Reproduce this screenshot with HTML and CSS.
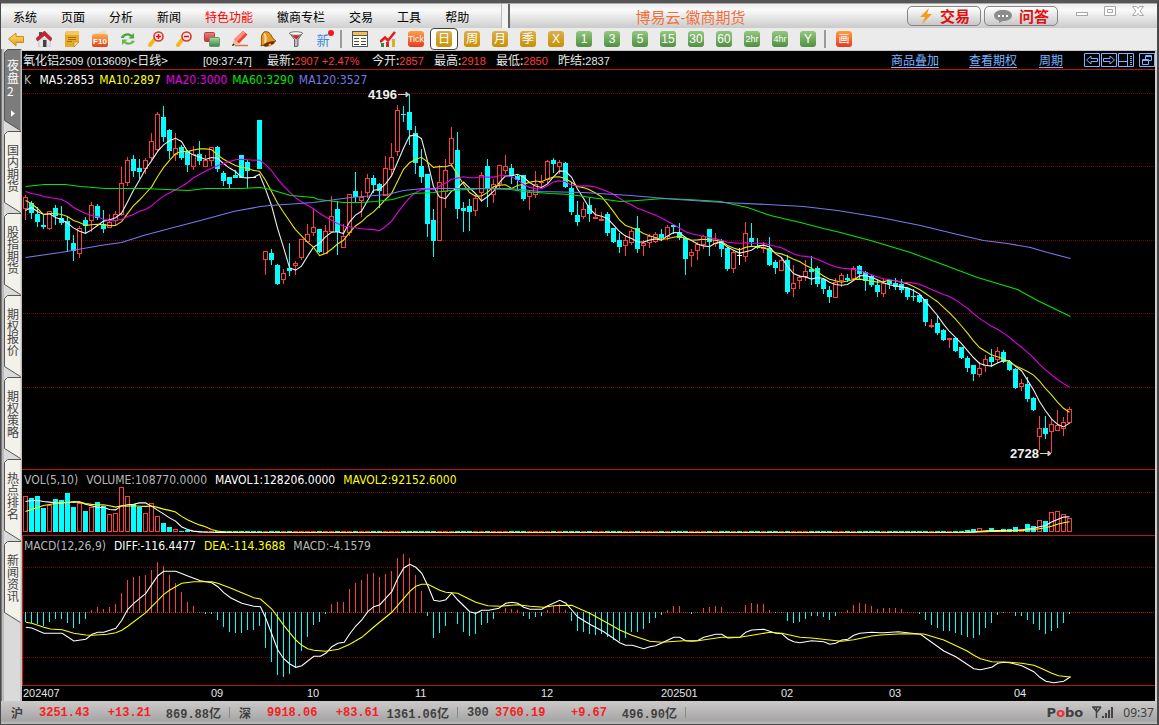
FILE: index.html
```html
<!DOCTYPE html>
<html lang="zh-CN">
<head>
<meta charset="utf-8">
<title>博易云-徽商期货</title>
<link rel="stylesheet" href="styles.css">
</head>
<body>
<svg class="defs" aria-hidden="true">
  <defs>
    <linearGradient id="g-gold" x1="0" y1="0" x2="0" y2="1"><stop offset="0" stop-color="#ffe27a"/><stop offset="1" stop-color="#e09a10"/></linearGradient>
    <linearGradient id="g-red" x1="0" y1="0" x2="0" y2="1"><stop offset="0" stop-color="#f08080"/><stop offset="1" stop-color="#c83030"/></linearGradient>
    <linearGradient id="g-green" x1="0" y1="0" x2="0" y2="1"><stop offset="0" stop-color="#a8d8a0"/><stop offset="1" stop-color="#3c8848"/></linearGradient>
    <linearGradient id="g-orange" x1="0" y1="0" x2="0" y2="1"><stop offset="0" stop-color="#ffb050"/><stop offset="1" stop-color="#e04020"/></linearGradient>
  </defs>
  <symbol id="tab" viewBox="0 0 17 82"><path d="M16.500 .5H3.500L.5 3.500V71.500L16.500 81.500Z" fill="currentColor"/><path d="M17 .5H3.500L.5 3.500V71.500L16.500 81.500" fill="none" stroke="#555"/></symbol>
</svg>
<div class="app">
  <header class="titlebar">
    <nav class="menu">
      <button>系统</button><button>页面</button><button>分析</button><button>新闻</button><button class="hot">特色功能</button><button>徽商专栏</button><button>交易</button><button>工具</button><button>帮助</button>
    </nav>
    <div class="caption">
      <h1 class="title">博易云-徽商期货</h1>
      <button class="pill"><svg width="16" height="16" viewBox="0 0 16 16"><path d="M11 0L2 9H7L4 16L14 6H9Z" fill="#f59a1c"/></svg>交易</button>
      <button class="pill"><svg width="20" height="16" viewBox="0 0 20 16"><path d="M10 2C15 2 19 4 19 7.500S15 13 10 13L6 15L6 12.500C3 11.500 1 10 1 7.500C1 4 5 2 10 2Z" fill="#8c8c8c"/><path d="M5 7h2v2H5zM9 7h2v2H9zM13 7h2v2h-2z" fill="#fff"/></svg>问答</button>
      <div class="win">
        <button aria-label="最小化"><svg width="16" height="14"><rect x="2.500" y="7.500" width="11" height="3" fill="#fff" stroke="#a8a8a8"/></svg></button>
        <button aria-label="最大化"><svg width="16" height="14"><path d="M2.500 1.500h11v9h-11zM5.500 4.500h5v3h-5z" fill="#fff" fill-rule="evenodd" stroke="#a8a8a8"/></svg></button>
        <button aria-label="关闭"><svg width="16" height="14"><path d="M2.500 1.500h4l1.500 2 1.500-2h4l-3.500 4.500 3.500 4.500h-4l-1.500-2-1.500 2h-4L6 6Z" fill="#fff" stroke="#a8a8a8"/></svg></button>
      </div>
    </div>
  </header>

  <div class="toolbar">
    <button aria-label="后退"><svg viewBox="0 0 16 16"><path d="M.5 8L8 2v3.500h7.500v6H8V15Z" fill="url(#g-gold)" stroke="#d08a10"/></svg></button>
    <button aria-label="主页"><svg viewBox="0 0 16 16"><path d="M3 8h11v8H3z" fill="#e8e8ec" stroke="#b0b0b8" stroke-width=".6"/><path d="M3 1h3v4H3z" fill="#555"/><path d="M8.500 0L0 7.500 1.500 10 8.500 4.500 14.500 10 16 7.500Z" fill="#d02030" stroke="#a01020" stroke-width=".6"/><path d="M7 9h3.500v7H7z" fill="#444"/></svg></button>
    <button aria-label="便笺"><svg viewBox="0 0 16 16"><path d="M2 0h13v11l-5 5H1V3Z" fill="#e8a828"/><path d="M2 0h13v4H2z" fill="#f4c860"/><path d="M15 11H10v5Z" fill="#fbe0a0" stroke="#b87808" stroke-width=".6"/><path d="M4 6.500h8M4 8.500h8M3 10.500h5" stroke="#a86c08"/></svg></button>
    <button aria-label="F10"><svg viewBox="0 0 16 16"><path d="M1 3L13 0 14 3Z" fill="#e8d8c0"/><rect x="0" y="3" width="16" height="13" rx="2" fill="url(#g-orange)"/><text x="8" y="13" class="mini">F10</text></svg></button>
    <button aria-label="刷新"><svg viewBox="0 0 16 16"><path d="M1 6C3 2 9 1 12 4l2-2v5.500H8.500L10.500 5.500C8 4 5 4 4 7H1Z" fill="#48a838"/><path d="M15 10C13 14 7 15 4 12l-2 2V8.500H7.500L5.500 10.500C8 12 11 12 12 9.500Z" fill="#68b850"/></svg></button>
    <button aria-label="放大"><svg viewBox="0 0 16 16"><path d="M6 9L2 14" stroke="#f5b820" stroke-width="4" stroke-linecap="round"/><circle cx="10.500" cy="5.500" r="4.500" fill="#fbe8e4" stroke="#dc3428" stroke-width="1.600"/><path d="M8 5.500h5M10.500 3v5" stroke="#d01818" stroke-width="1.500"/></svg></button>
    <button aria-label="缩小"><svg viewBox="0 0 16 16"><path d="M6 9L2 14" stroke="#f5b820" stroke-width="4" stroke-linecap="round"/><circle cx="10.500" cy="5.500" r="4.500" fill="#fbe8e4" stroke="#dc3428" stroke-width="1.600"/><path d="M8 5.500h5" stroke="#d01818" stroke-width="1.500"/></svg></button>
    <button aria-label="叠加"><svg viewBox="0 0 16 16"><rect x=".5" y="1.500" width="10" height="9" rx="1" fill="url(#g-red)" stroke="#c04040"/><rect x="5.500" y="6.500" width="10" height="9" rx="1" fill="url(#g-green)" stroke="#609868"/></svg></button>
    <button aria-label="画笔"><svg viewBox="0 0 16 16"><path d="M3 14.500h13" stroke="#e86858" stroke-width="1.500"/><path d="M11 0L15.500 3.500 7 12.500 2 8.500Z" fill="#f04030"/><path d="M11 0L13.500 2 4.500 11 2 8.500Z" fill="#ff9080"/><path d="M2 8.500L7 12.500 0 15Z" fill="#e8c090"/><path d="M1 12.500L3 14 0 15Z" fill="#222"/></svg></button>
    <button aria-label="提醒"><svg viewBox="0 0 16 16"><path d="M4 1C8-.5 11 3 12 6c1 2 3 3 4 4L1 15C2 12 1 9 1.500 6 2 3 3 2 4 1Z" fill="#e89828" stroke="#904c08"/><path d="M4 3c2 1 2 6 1 9" stroke="#ffe090" stroke-width="2" fill="none"/><ellipse cx="9" cy="13" rx="6" ry="2" transform="rotate(-18 9 13)" fill="#6c3008"/><circle cx="10" cy="14" r="1.500" fill="#f0b040"/></svg></button>
    <button aria-label="筛选"><svg viewBox="0 0 16 16"><path d="M1.500 2h13L10 8.500V15L6.500 16V8.500Z" fill="#b8bcc4" stroke="#606468"/><ellipse cx="8" cy="2.500" rx="6.500" ry="1.800" fill="#f8f8f8" stroke="#777"/><path d="M4 4.500h8L8.500 8.500Z" fill="#d82020"/></svg></button>
    <button class="new">新<i></i></button>
    <span class="sep"></span>
    <button aria-label="报价"><svg viewBox="0 0 16 16"><rect x=".5" y=".5" width="15" height="15" fill="#fff" stroke="#555"/><path d="M1 1h14v3H1z" fill="#f0c050"/><path d="M1 4.500h14" stroke="#555"/><path d="M2 7.500h5M9 7.500h5" stroke="#208030"/><path d="M2 10.500h5M9 10.500h5" stroke="#c02020"/><path d="M2 13.500h5M9 13.500h5" stroke="#204080"/></svg></button>
    <button aria-label="走势"><svg viewBox="0 0 16 16"><path d="M1 12h3v4H1z" fill="#308838"/><path d="M6 11h3v5H6z" fill="#c83020"/><path d="M12 8h3v8h-3z" fill="#d8b020"/><path d="M0 11L5 6.500 8 9.500 15 1" fill="none" stroke="#e81818" stroke-width="2.500"/></svg></button>
    <button><b class="tile orange">Tick</b></button>
    <button class="on"><b class="tile gold">日</b></button>
    <button><b class="tile gold">周</b></button>
    <button><b class="tile gold">月</b></button>
    <button><b class="tile gold">季</b></button>
    <button><b class="tile gold">X</b></button>
    <button><b class="tile green">1</b></button>
    <button><b class="tile green">3</b></button>
    <button><b class="tile green">5</b></button>
    <button><b class="tile green">15</b></button>
    <button><b class="tile green">30</b></button>
    <button><b class="tile green">60</b></button>
    <button><b class="tile green small">2hr</b></button>
    <button><b class="tile green small">4hr</b></button>
    <button><b class="tile green">Y</b></button>
    <span class="sep"></span>
    <button><b class="tile orange">画</b></button>
  </div>

  <main class="work">
    <nav class="tabs">
      <button class="tab active"><svg><use href="#tab"/></svg><span>夜盘2</span><svg class="play" viewBox="0 0 5 8"><path d="M0 0L5 4 0 8Z" fill="#fff"/></svg></button>
      <button class="tab"><svg><use href="#tab"/></svg><span>国内期货</span></button>
      <button class="tab"><svg><use href="#tab"/></svg><span>股指期货</span></button>
      <button class="tab"><svg><use href="#tab"/></svg><span>期权报价</span></button>
      <button class="tab"><svg><use href="#tab"/></svg><span>期权策略</span></button>
      <button class="tab"><svg><use href="#tab"/></svg><span>热点排名</span></button>
      <button class="tab"><svg><use href="#tab"/></svg><span>新闻资讯</span></button>
    </nav>
    <section class="charts">
      <div class="quote">
        <span class="q-name">氧化铝<b>2509 (013609)</b>&lt;日线&gt;</span>
        <span class="q-time"><b>[09:37:47]</b></span>
        <span class="q-last">最新:<b class="up">2907 +2.47%</b></span>
        <span class="q-item">今开:<b class="up">2857</b></span>
        <span class="q-item">最高:<b class="up">2918</b></span>
        <span class="q-item">最低:<b class="up">2850</b></span>
        <span class="q-item">昨结:<b>2837</b></span>
        <span class="links"><a href="#">商品叠加</a><a href="#">查看期权</a><a href="#">周期</a></span>
        <span class="tools">
          <button aria-label="左移"><svg width="16" height="14"><path d="M.5.5h15v13H.5zM2.500 7L7 3v2.500h6.500v3H7V11Z"/></svg></button>
          <button aria-label="右移"><svg width="16" height="14"><path d="M.5.5h15v13H.5zM13.500 7L9 3v2.500H2.500v3H9V11Z"/></svg></button>
          <button aria-label="侧栏"><svg width="16" height="14"><path d="M.5.5h15v13H.5zM.5 8.500h9M9.500.5v13M12 3.500h2M12 5.500h2M12 7.500h2M12 9.500h2M12 11.500h2"/></svg></button>
          <button aria-label="还原" class="restore"><svg width="16" height="14"><path d="M.5.5h15v13H.5zM3.500 6.500h6v5h-6zM3 7.500h7M6.500 6V2.500h6v5H10M6 3.500h7"/></svg></button>
        </span>
      </div>
      <div class="panel price">
        <svg id="price"></svg>
        <div class="legend"><span class="c-grey">K&nbsp;</span><span class="c-white">MA5:2853</span><span class="c-yellow">MA10:2897</span><span class="c-magenta">MA20:3000</span><span class="c-green">MA60:3290</span><span class="c-blue">MA120:3527</span></div>
      </div>
      <div class="panel volume">
        <svg id="volume"></svg>
        <div class="legend"><span class="c-grey">VOL(5,10)</span><span class="c-grey">VOLUME:108770.0000</span><span class="c-white">MAVOL1:128206.0000</span><span class="c-yellow">MAVOL2:92152.6000</span></div>
      </div>
      <div class="panel macd">
        <svg id="macd"></svg>
        <div class="legend"><span class="c-grey">MACD(12,26,9)</span><span class="c-white">DIFF:-116.4477</span><span class="c-yellow">DEA:-114.3688</span><span class="c-grey">MACD:-4.1579</span></div>
      </div>
      <svg id="axis" class="axis"></svg>
    </section>
  </main>

  <footer class="status">
    <div class="idx"><span>沪</span><b class="up">3251.43</b><b class="up chg">+13.21</b><b class="amt">869.88亿</b></div>
    <div class="idx"><span>深</span><b class="up">9918.06</b><b class="up chg">+83.61</b><b class="amt">1361.06亿</b></div>
    <div class="idx"><span>300</span><b class="up">3760.19</b><b class="up chg">+9.67</b><b class="amt">496.90亿</b></div>
    <div class="sys"><strong>P<em>o</em>bo</strong><svg width="22" height="13"><path d="M0 1h9M1 1l4 5 4-5M4.500 1v11" fill="none" stroke="#444" stroke-width="1.500"/><path d="M10 10h2v2h-2zM13 7h2v5h-2zM16 4h2v8h-2zM19 1h2v11h-2z" fill="#444"/></svg><time>09:37</time></div>
  </footer>
</div>
<script src="chart.js"></script>
</body>
</html>
```

FILE: styles.css
```css
* { box-sizing: border-box; }
body { margin: 0; font-family: "Liberation Sans", "Noto Sans CJK SC", sans-serif; font-size: 12px; color: #000; }
button { border: 0; padding: 0; margin: 0; background: none; font: inherit; color: inherit; }
.defs { position: absolute; width: 0; height: 0; }
.app { min-height: 100vh; display: flex; flex-direction: column; background: #d2cccc; border: 1px solid #4a4a4a; border-top: 3px solid #555; border-right-width: 2px; }

/* title bar */
.titlebar { display: flex; height: 25px; border-top: 1px solid #aaa; background: #f4f4f4; }
.menu { display: flex; gap: 24px; align-items: center; padding-left: 12px; width: 501px; background: linear-gradient(#ececec, #fafafa 25%, #cfcfcf); font-family: "Noto Sans CJK SC", sans-serif; border-right: 1px solid #bbb; }
.hot { color: #f00; }
.caption { flex: 1; display: flex; align-items: center; margin-left: 6px; border-left: 2px solid #666; background: linear-gradient(#ececec, #fafafa 25%, #cacaca); }
.title { flex: 1; margin: 0; padding-right: 36px; text-align: center; font: 15px "Liberation Sans", "Noto Sans CJK SC", sans-serif; color: #f0703c; }
.pill { display: flex; align-items: center; justify-content: center; gap: 6px; width: 74px; height: 20px; margin-right: 3px; border: 1px solid #858585; border-radius: 5px; background: linear-gradient(#fff, #e4e4e4 50%, #c8c8c8); color: #e01010; font: bold 15px "Noto Sans CJK SC", sans-serif; line-height: 16px; }
.win { display: flex; gap: 12px; padding: 0 11px 8px 13px; }
.win button { height: 14px; }

/* toolbar */
.toolbar { display: flex; height: 23px; padding-left: 1px; background: #ebebeb; align-items: center; border-bottom: 1px solid #ccc6c6; }
.toolbar button { width: 28px; height: 22px; display: flex; align-items: center; justify-content: center; position: relative; }
.toolbar svg { width: 16px; height: 16px; }
.toolbar .sep { width: 2px; height: 18px; margin: 0 4px 0 2px; background: #999; }
.toolbar .on { border: 1px solid #444; border-radius: 4px; background: #fff; }
.mini { font: bold 8px "Liberation Sans", sans-serif; fill: #fff; text-anchor: middle; }
.toolbar .new { color: #3a8ad8; font-size: 13px; padding-right: 2px; }
.new i { position: absolute; right: 4px; top: 2px; width: 6px; height: 6px; border-radius: 50%; background: #f01818; }
.tile { width: 16px; height: 16px; border-radius: 3px; color: #fff; font: 12px/16px "Liberation Sans", "Noto Sans CJK SC", sans-serif; text-align: center; display: flex; justify-content: center; }
.gold { background: linear-gradient(#dcb050, #c89000); }
.green { background: linear-gradient(#94c880, #509040); }
.orange { background: linear-gradient(#ffa040, #e83820); }
.toolbar .tile.small, .tile.orange { font-size: 9px; }
.toolbar button:last-child .tile { font-size: 11px; }

/* workspace */
.work { flex: 1; display: flex; padding-right: 2px; }
.tabs { display: flex; flex-direction: column; width: 21px; padding-left: 3px; margin-top: -2px; background: linear-gradient(90deg, #777 0 1px, #bbb 1px 3px, #dadada 3px 19px, #c8c0c0 19px); }
.tab { position: relative; color: #f2f1ea; width: 17px; height: 82px; }
.tab svg { position: absolute; left: 0; top: 0; width: 17px; height: 82px; }
.tab span { position: relative; display: block; width: 12px; height: 52px; margin: -4px 0 0 3px; color: #444; font: 12px/12px "Noto Sans CJK SC", sans-serif; word-break: break-all; }
.tab.active { color: #7c7c7c; }
.tab.active span { color: #fff; text-align: left; margin-top: -24px; height: 40px; line-height: 13px; }
.tab .play { left: 7px; top: 61px; width: 4px; height: 7px; }
.charts { flex: 1; min-width: 0; background: #000; color: #e6e6e6; display: flex; flex-direction: column; }
.quote { display: flex; height: 19px; line-height: 18px; padding-left: 1px; border-bottom: 1px solid #b81810; font-family: "Noto Sans CJK SC", sans-serif; white-space: nowrap; }
.quote b { font: 11px "Liberation Sans", sans-serif; }
.q-name { width: 180px; }
.q-time { width: 64px; }
.q-last { width: 105px; }
.q-item { width: 62px; }
.quote .up { color: #ff3c3c; }
.links { margin-left: auto; display: flex; gap: 30px; }
.links a { color: #78b4ff; text-underline-offset: 2px; }
.links a:last-child { margin-left: -8px; }
.tools { display: flex; gap: 1px; align-items: center; margin-left: 21px; }
.tools button { height: 14px; display: flex; }
.tools svg { fill: none; stroke: #78b4ff; }
.tools .restore { margin-left: 4px; }
.panel { position: relative; border-bottom: 1px solid #b81810; }
.panel > svg { display: block; width: 100%; height: 100%; }
.price { height: 400px; }
.volume { height: 66px; }
.macd { height: 150px; border-left: 1px solid #e01010; }
.legend { position: absolute; left: 2px; top: 2px; display: flex; gap: 8px; font: 12px/16px "DejaVu Sans Condensed", "DejaVu Sans", sans-serif; white-space: nowrap; }
.price .legend { gap: 5px; }
.macd .legend { left: 1px; }
.c-grey { color: #b8b8b8; }
.c-white { color: #fff; }
.c-yellow { color: #ff0; }
.c-magenta { color: #e800e8; }
.c-green { color: #00e800; }
.c-blue { color: #7878e8; }
.axis { width: 100%; height: 15px; display: block; }
.axis text { font: 11px "Liberation Sans", sans-serif; fill: #e6e6e6; }
.mark { font: bold 13px "Liberation Sans", sans-serif; fill: #f0f0f0; }

/* status bar */
.status { display: flex; align-items: center; height: 23px; padding-left: 10px; background: linear-gradient(#cdc9c9, #a6a6a6 85%, #c0c0c0); color: #404040; font: 12px "Liberation Mono", "Noto Sans CJK SC", monospace; white-space: nowrap; }
.idx { display: flex; align-items: center; }
.idx::after { content: ""; width: 1px; height: 11px; background: #888; margin: 0 9px 0 8px; }
.idx span { min-width: 28px; font-weight: bold; }
.idx .up { color: #f82020; min-width: 64px; }
.idx .chg { width: 48px; min-width: 0; text-align: right; }
.idx .amt { min-width: 70px; text-align: right; }
.sys { margin-left: auto; display: flex; align-items: center; gap: 9px; padding-right: 3px; font: 12px "Noto Sans", sans-serif; }
.sys strong { font: bold 13px "DejaVu Sans", sans-serif; }
.sys em { font-style: normal; color: #f03030; }
```

FILE: chart.js
```js
const LEFT = 22, STEP = 6, FIRST = 25;
const RED = "#ff3c3c", CYAN = "#00ffff";

// Each bar: colour, then high, body top, body bottom and low in chart pixels.
const bars = `r195,197,209,220 c201,203,213,219 c207,214,222,227 c214,225,227,229 r211,211,229,230 c205,208,216,225 c206,218,223,225 c217,221,240,252 c235,243,251,261 r226,228,254,258
c217,220,226,233 r202,205,221,232 c204,206,218,220 c210,224,229,233 r214,222,228,228 r211,214,221,225 r167,183,215,216 r157,160,183,186 c155,159,171,177 c159,168,172,179
r158,160,169,174 r133,141,158,160 r112,114,150,152 c106,117,137,142 c129,130,151,159 r133,148,155,161 c145,147,158,160 c150,151,165,172 r146,154,167,170 c141,154,161,165
r155,160,167,167 r147,147,161,166 c146,147,169,172 c171,173,181,186 c177,177,184,188 c170,175,178,178 c155,155,178,178 c160,162,171,188 w177,177,178,178 c120,120,169,169
r251,251,260,275 c249,253,260,265 c264,265,284,285 r269,273,280,284 c243,268,271,276 r261,263,266,275 r239,239,258,260 r224,234,242,242 r209,227,233,236 c229,229,252,253
r225,231,254,254 r196,216,232,232 c201,209,232,255 r224,236,248,248 r194,194,233,236 c172,191,197,203 r191,197,201,217 r174,178,193,198 c175,178,185,193 c183,184,191,208
r156,168,196,196 r143,157,170,176 r105,110,152,156 c106,114,115,122 c94,112,130,145 c126,133,163,174 c149,166,177,183 c174,174,224,237 c209,220,241,257 r165,182,241,241
r159,170,192,208 r127,138,164,167 c132,150,209,219 c202,208,211,232 c199,206,212,231 r194,198,211,216 r172,175,193,202 c159,166,188,207 r179,184,195,203 r165,165,184,188
r155,166,171,174 c164,168,176,184 c174,176,180,191 c175,175,199,201 r190,192,197,210 r171,184,195,198 r175,182,183,187 r160,161,180,184 c158,160,164,173 r160,162,167,174
c162,163,187,188 c182,188,212,215 c201,215,222,226 r202,209,217,219 c198,205,214,222 r208,217,219,219 r212,219,221,221 c212,214,233,236 c228,228,242,243 c233,240,247,253
r235,240,246,256 r229,231,243,245 c216,228,249,253 r240,243,246,256 r234,236,243,248 r232,234,242,243 c229,234,238,241 r225,227,237,240 c224,225,227,234 c223,232,238,240
c238,238,259,275 r249,252,256,267 r242,244,251,260 r235,236,245,249 c229,229,242,256 r233,240,244,247 c239,241,249,257 c247,248,269,271 r250,252,269,273 w248,255,256,265
r222,233,257,262 c223,238,242,246 c238,246,248,249 r242,247,249,253 c237,248,265,266 c260,262,268,274 r258,260,271,271 c255,260,292,294 r265,283,289,297 r275,277,281,289
r260,271,277,281 c256,269,272,285 c266,268,284,287 c279,279,289,294 c286,290,297,303 r278,282,298,298 r273,275,281,287 c274,278,280,282 r266,268,279,281 c265,266,274,279
c271,272,281,291 c275,276,285,287 c280,285,292,297 r279,283,294,297 c279,280,284,289 c278,283,287,290 c279,284,290,293 c287,288,297,300 c289,296,297,301 c294,295,302,303
c299,299,322,326 r319,325,327,328 c316,323,333,335 c329,330,340,341 r338,338,340,348 c338,338,351,352 c347,347,358,359 c356,358,368,372 c365,365,374,381 r362,368,375,377
r355,359,366,372 c349,357,362,367 r347,351,360,363 c350,352,362,363 c360,362,370,371 c368,369,388,389 r379,383,387,391 c377,384,399,402 c397,398,410,411 r416,428,437,450
c416,428,434,439 r419,424,432,453 r410,425,431,431 r417,422,429,436 r407,409,423,424`
  .split(/\s+/).map(s => [s[0], ...s.slice(1).split(",").map(Number)]);

const volHead = [496,498,496,508,505,499,500,493,507,503,511,507,502,506,514,513,487,496,504,507,513,503,516,523,527,529,531,530];
const volTail = [530,529,528,530,528,530,529,529,527,529,524,526,520,521,512,511,514,518];
const vols = bars.map((b, i) => i < volHead.length ? volHead[i] : i >= 157 ? volTail[i - 157] : 531);

const hist = [-10,-11,-12,-14,-10,-7,-7,-11,-16,-12,-7,2,5,3,5,8,19,32,35,36,37,42,50,46,37,29,20,10,6,0,-2,-2,-8,-15,-20,-21,-21,-18,-18,-14,-36,-50,-63,-65,-62,-55,-39,-25,-13,-10,-2,8,10,10,23,29,32,38,39,35,38,41,54,58,54,37,21,-4,-26,-21,-14,-1,-12,
-20,-24,-22,-13,-11,-7,0,4,3,2,-4,-7,-5,-4,2,6,8,2,-9,-19,-20,-22,-23,-22,-25,-28,-29,-26,-20,-20,-17,-11,-6,-3,2,6,6,0,-2,0,4,5,6,5,0,0,0,7,9,8,8,2,-1,-1,-9,-11,-10,-7,-4,-4,-5,-8,-4,0,2,7,9,8,6,3,4,4,4,3,0,0,-2,-8,-13,-16,-19,-19,-21,-23,-25,-26,-23,-16,-11,-3,-1,0,-4,-4,-8,-12,-18,-22,-19,-16,-11,-2];

const ma60 = [[25,186],[44,184],[65,184],[80,186],[105,188],[145,188],[165,189],[188,190],[205,188],[240,188],[260,187],[270,189],[290,195],[313,197],[318,199],[343,202],[360,202],[375,201],[392,199],[413,193],[433,192],[450,190],[483,188],[510,189],[523,191],[550,193],[570,194],[590,197],[620,201],[637,200],[663,198],[687,199],[720,201],[747,207],[770,215],[800,222],[823,228],[840,232],[870,240],[910,252],[937,262],[977,277],[1017,289],[1037,300],[1070,316]];
const ma120 = [[25,257],[60,252],[100,245],[121,242],[143,235],[173,227],[200,220],[233,211],[260,206],[270,205],[313,202],[350,197],[387,194],[403,190],[423,188],[510,188],[540,191],[583,192],[630,195],[677,199],[723,202],[767,204],[803,206],[837,210],[880,217],[920,225],[953,233],[983,240],[1007,243],[1030,247],[1047,252],[1070,258]];

// Oscillator curves are sampled in thirds of a pixel from a segment origin.
const thirds = (ox, oy, list) => list.map(([x, y]) => [ox + x / 3, oy + y / 3 - 0.5]);
const diff = [
  ...thirds(0, 540, [[76,262],[94,264],[130,280],[185,280],[220,303],[256,298],[275,283],[292,277],[310,277],[346,265],[364,241],[382,208],[400,190],[436,160],[472,107],[490,94],[526,94],[562,108],[600,122],[634,128],[652,140],[670,158],[690,173],[724,190],[760,199],[780,200],[796,235],[814,282],[832,330],[850,356],[868,372],[886,382],[904,377],[940,349],[960,349],[978,338],[994,320],[1012,310],[1031,307],[1048,281],[1066,258],[1084,240],[1102,215],[1120,200],[1138,194],[1174,155],[1192,115],[1210,84],[1228,73],[1246,82],[1264,100],[1282,137],[1300,181],[1318,184],[1336,179],[1354,159],[1372,180]]),
  ...thirds(460, 580, [[28,95],[46,100],[64,91],[85,91],[115,85],[136,70],[154,67],[172,70],[190,82],[208,88],[244,88],[262,77],[298,61],[316,70],[334,90],[352,111],[388,133],[430,155],[478,188],[495,196],[515,196],[550,206],[568,200],[585,197],[604,189],[640,172],[658,172],[676,182],[694,184],[710,182],[730,172],[766,163],[784,163],[802,174],[838,172],[856,157],[874,150],[910,148],[946,160],[964,161],[982,177],[1000,185],[1018,188],[1054,182],[1090,185],[1108,193],[1126,190],[1144,180],[1162,178],[1180,166],[1198,160],[1234,157],[1256,158]]),
  ...thirds(880, 480, [[10,458],[54,455],[120,463],[190,513],[226,530],[280,566],[300,569],[334,562],[352,550],[370,547],[388,548],[424,557],[460,575],[478,592],[496,604],[520,608],[550,604],[570,590]])
];
const dea = [
  ...thirds(0, 540, [[76,247],[94,250],[130,262],[150,267],[185,269],[220,280],[256,285],[275,286],[320,283],[346,278],[364,271],[382,259],[436,218],[490,163],[508,150],[544,130],[580,125],[634,125],[652,130],[690,144],[724,158],[760,173],[780,177],[814,207],[850,256],[886,300],[904,316],[922,326],[940,331],[976,334],[1014,328],[1048,313],[1084,292],[1120,261],[1174,217],[1210,175],[1228,154],[1246,139],[1264,133],[1282,133],[1318,151],[1336,157],[1372,160]]),
  ...thirds(460, 580, [[0,44],[46,67],[82,77],[118,79],[172,74],[208,79],[250,82],[280,77],[334,76],[388,100],[442,130],[478,150],[514,166],[568,184],[604,187],[670,182],[712,182],[784,172],[838,172],[928,157],[964,160],[1018,172],[1054,174],[1100,179],[1144,184],[1180,179],[1234,168]]),
  ...thirds(880, 480, [[0,465],[66,461],[130,462],[190,480],[260,513],[280,526],[300,536],[334,545],[388,547],[424,550],[460,556],[480,564],[514,580],[534,587],[570,591]])
];

const xAt = i => FIRST + STEP * i;
const rect = (x, y, w, h, fill) => `<rect x="${x}" y="${y}" width="${w}" height="${h}" fill="${fill}"/>`;
const curve = (pts, color) => `<polyline fill="none" stroke="${color}" stroke-width="1.1" points="${pts.map(p => (p[0] + .5).toFixed(1) + "," + (p[1] + .5).toFixed(1)).join(" ")}"/>`;
const grid = (y, color = "#800000") => `<path d="M${LEFT + 1} ${y}.5H5000" stroke="${color}" stroke-dasharray="1 1"/>`;
const box = (x, top, bottom) => bottom - top < 3
  ? rect(x - 2, top, 5, Math.max(1, bottom - top), RED)
  : `<rect x="${x - 1.5}" y="${top + .5}" width="4" height="${bottom - top - 1}" fill="#000" stroke="${RED}"/>`;

// Values before the window is full come from the "lead" samples.
function average(values, n, lead) {
  return values.map((v, i) => {
    if (i < n - 1) return [xAt(i), lead[i]];
    let sum = 0;
    for (let k = i - n + 1; k <= i; k++) sum += values[k];
    return [xAt(i), sum / n];
  });
}

function draw(id, left, top, body) {
  document.getElementById(id).innerHTML = `<g transform="translate(${-left} ${-top})">${body}</g>`;
}

const closes = bars.map(b => b[0] === "r" ? b[2] : b[0] === "c" ? b[3] - 1 : b[2]);
const candles = bars.map(([c, h, t, b, l], i) => {
  const x = xAt(i), color = c === "r" ? RED : c === "c" ? CYAN : "#fff";
  return rect(x, h, 1, l - h, color) + (c === "r" ? box(x, t, b) : rect(x - 2, t, 5, b - t, color));
}).join("");

draw("price", LEFT, 70, [93, 166, 240, 313, 387].map(y => grid(y)).join("") + candles
  + curve(average(closes, 5, [210, 207, 211, 214]), "#eee")
  + curve(average(closes, 10, [200, 203, 208, 214, 213, 213, 214, 216, 220]), "#e8e800")
  + curve(average(closes, 20, [191,193,194,196,197,198,199,202,207,210,213,215,216,219,220,220,219,216,214]), "#e800e8")
  + curve(ma60, "#00e800") + curve(ma120, "#7878f0")
  + `<text class="mark" x="368" y="99">4196</text><path d="M398 94.500h11M406 92v5l3-2.500z" stroke="#ccc" fill="#ccc"/>`
  + `<text class="mark" x="1010" y="458">2728</text><path d="M1040 453.500h11M1048 451v5l3-2.500z" stroke="#ccc" fill="#ccc"/>`);

// The averages run one row below the bars so that they rest on the base line.
const lower = pts => pts.map(([x, y]) => [x, y + 1]);
draw("volume", LEFT, 470, grid(492)
  + vols.map((v, i) => bars[i][0] === "r" ? box(xAt(i), v, 532) : rect(xAt(i) - 2, v, 5, 532 - v, CYAN)).join("")
  + curve(lower(average(vols, 5, [500, 499, 499, 500])), "#fff")
  + curve(lower(average(vols, 10, [510, 508, 506, 504, 503, 502, 501, 501, 500])), "#ff0"));

draw("macd", LEFT + 1, 536, grid(567) + grid(612, "#c81818") + grid(657)
  + hist.map((v, i) => v >= 0 ? rect(xAt(i), 612 - v, 1, v + 1, RED) : rect(xAt(i), 612, 1, -v, CYAN)).join("")
  + curve(diff, "#fff") + curve(dea, "#ff0"));

draw("axis", LEFT, 686, [["202407", 23], ["09", 211], ["10", 307], ["11", 415], ["12", 541], ["202501", 661], ["02", 781], ["03", 889], ["04", 1014]]
  .map(([t, x]) => `<text x="${x}" y="697">${t}</text>`).join(""));
```
